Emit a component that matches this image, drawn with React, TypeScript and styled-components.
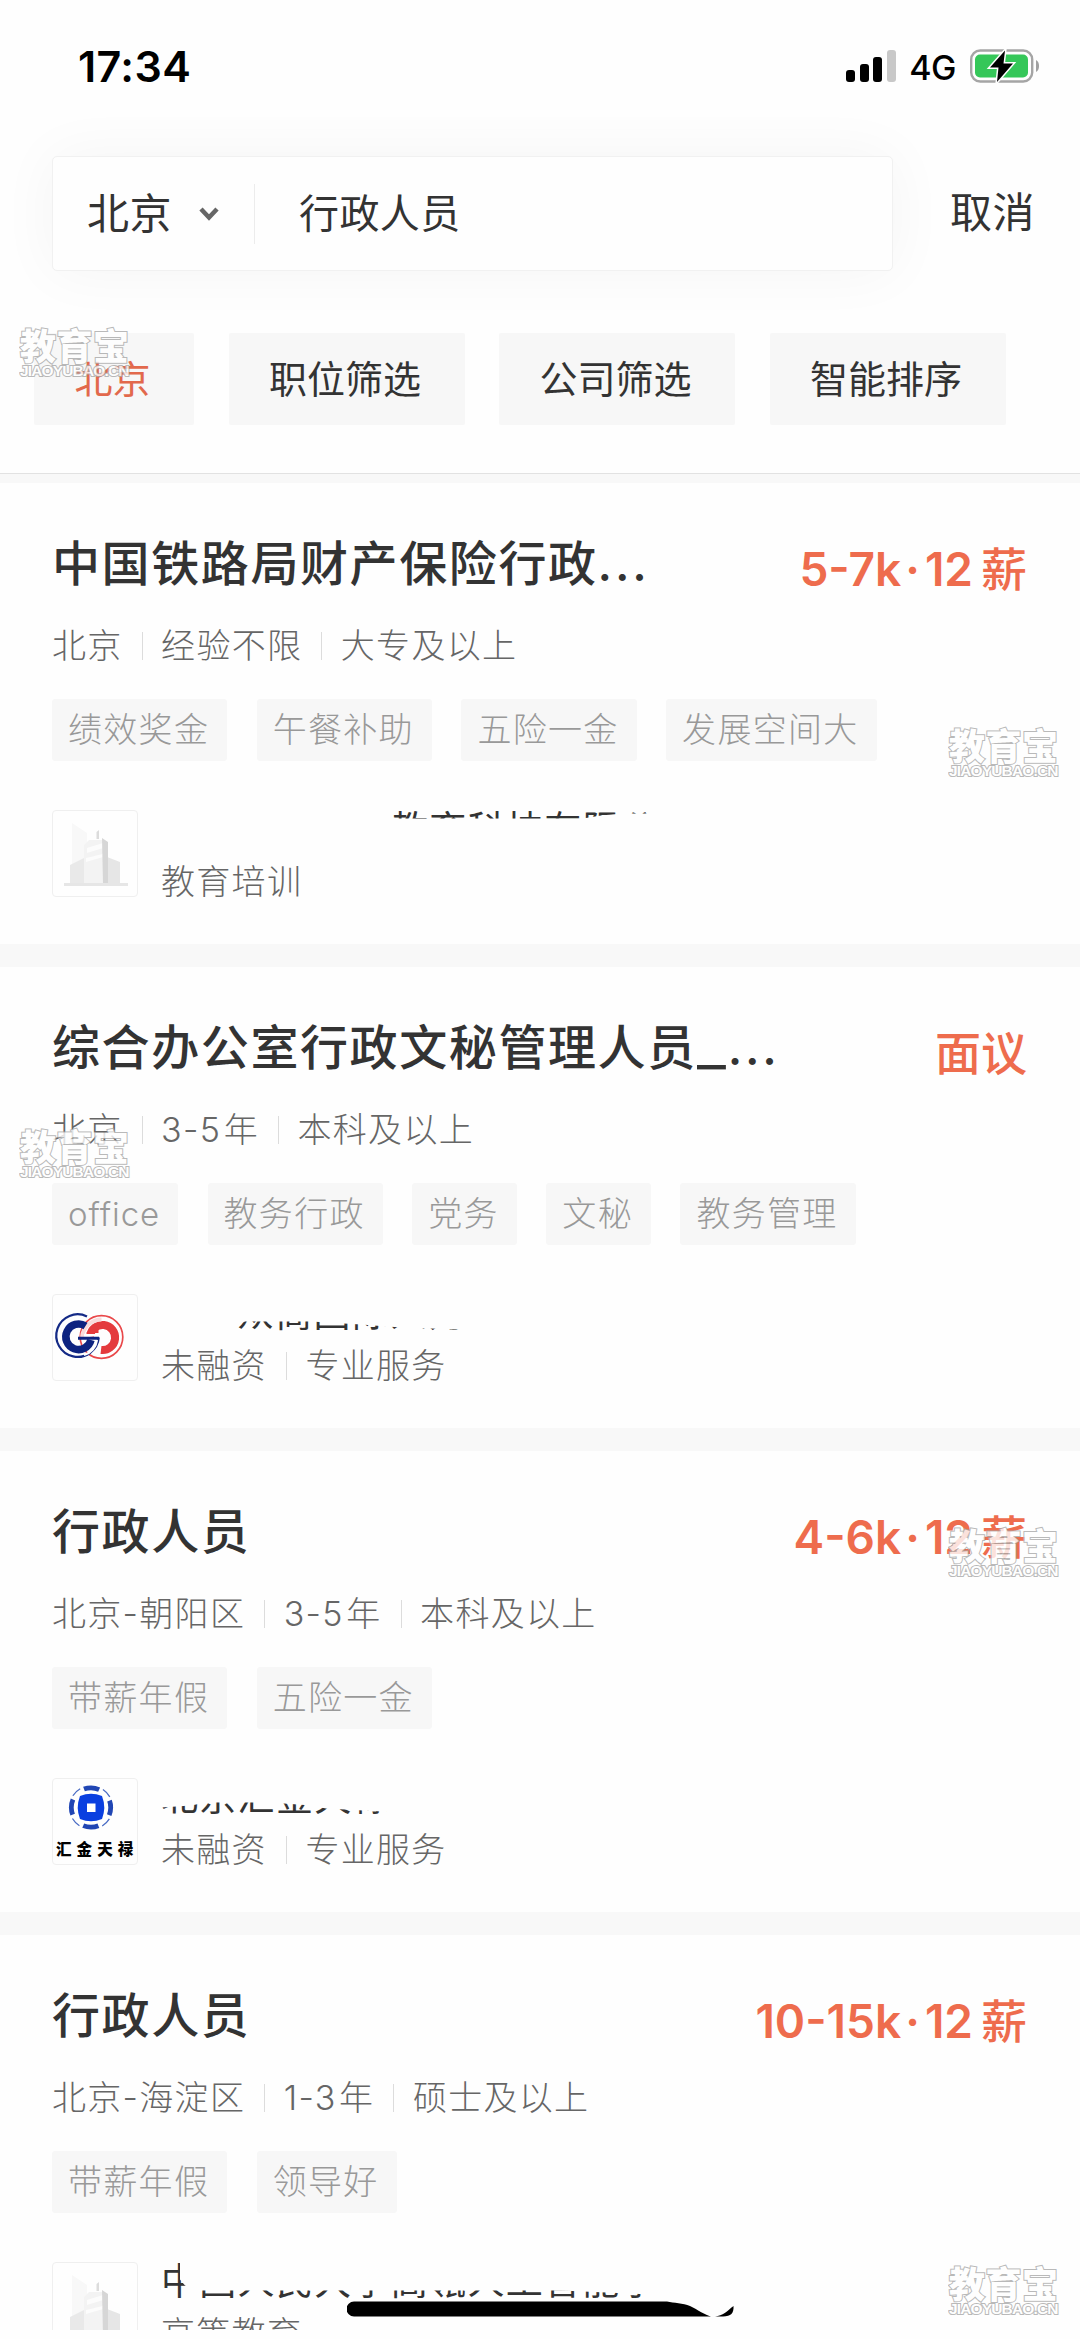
import React from "react";
import styled, { createGlobalStyle } from "styled-components";

const GlobalStyle = createGlobalStyle`
  * { box-sizing: border-box; }
  body {
    margin: 0;
    background: #fefefe;
    font-family: Inter, "Noto Sans CJK SC", sans-serif;
    color: #333;
  }
`;

const Screen = styled.div`
  position: relative;
  width: 1080px;
  height: 2339px;
  overflow: hidden;
  background: #fefefe;
`;

const Viewport = styled.div`
  height: 2330px;
  overflow: hidden;
`;

const StatusBar = styled.div`
  height: 132px;
  padding: 0 41px 0 78px;
  display: flex;
  align-items: center;
  justify-content: space-between;
  color: #000;
`;

const Clock = styled.div`
  font-size: 43px;
  font-weight: 600;
  letter-spacing: 0.4px;
`;

const StatusIcons = styled.div`
  display: flex;
  align-items: center;
`;

const Network = styled.span`
  margin: 2px 14px 0 13px;
  font-size: 34px;
  font-weight: 500;
  letter-spacing: -0.5px;
`;

const SearchRow = styled.div`
  margin-top: 24px;
  padding: 0 45px 0 52px;
  display: flex;
  align-items: center;
  justify-content: space-between;
`;

const SearchBox = styled.div`
  width: 841px;
  height: 115px;
  margin-bottom: -1px;
  padding-left: 34px;
  display: flex;
  align-items: center;
  background: #fefefe;
  border: 1px solid #f1f1f1;
  border-radius: 5px;
  box-shadow: 0 0 60px rgba(0, 0, 0, 0.045);
`;

const City = styled.span`
  font-size: 42px;
  line-height: 60px;
  letter-spacing: 0.5px;
`;

const Chevron = styled.svg`
  margin: 0 34px 0 26px;
`;

const SearchDivider = styled.i`
  width: 1px;
  height: 60px;
  background: #ececec;
`;

const Query = styled.span`
  margin-left: 44px;
  font-size: 40px;
  line-height: 60px;
  letter-spacing: 0.4px;
`;

const Filters = styled.div`
  padding: 63px 34px 48px;
  display: flex;
  gap: 34.5px;
  border-bottom: 1px solid #e2e2e2;
`;

const Filter = styled.button<{ $active?: boolean }>`
  width: ${(p) => (p.$active ? "160px" : "236px")};
  height: 92px;
  padding: 0 3px 0 0;
  border: 0;
  border-radius: 2px;
  background: #f7f7f7;
  color: ${(p) => (p.$active ? "#e2694c" : "#333")};
  font: inherit;
  font-size: 38px;
  line-height: 60px;
`;

const Band = styled.div<{ $height: number }>`
  height: ${(p) => p.$height}px;
  background: #f8f8f8;
`;

const Card = styled.article`
  height: 461px;
  padding: 50.5px 53px 0 52px;
`;

const TitleRow = styled.div`
  height: 60px;
  display: flex;
  justify-content: space-between;
`;

const Title = styled.h2`
  margin: 0;
  font-size: 48px;
  font-weight: 500;
  line-height: 60px;
  letter-spacing: 1.6px;
`;

const Ellipsis = styled.span`
  letter-spacing: 2.8px;
`;

const Underscore = styled.span`
  display: inline-block;
  transform: scaleX(1.3);
  transform-origin: left;
  margin-right: 7px;
`;

const Salary = styled.div`
  margin-top: 5px;
  font-size: 46px;
  font-weight: 600;
  line-height: 60px;
  color: #ee6c4d;
  white-space: nowrap;
`;

const SalaryDot = styled.span`
  margin: 0 5px 0 4px;
`;

const SalaryUnit = styled.span`
  margin-left: 8px;
  font-weight: 500;
`;

const Meta = styled.div`
  display: flex;
  align-items: center;
  font-size: 34px;
  font-weight: 300;
  line-height: 34px;
  letter-spacing: 1.3px;
  color: #666;
  & > span + span {
    margin-left: 19px;
    padding-left: 19.5px;
    background: linear-gradient(#dcdcdc, #dcdcdc) 0 3px / 1px 28px no-repeat;
  }
`;

const Year = styled.span`
  margin-left: 2.5px;
`;

const JobMeta = styled(Meta)`
  margin-top: 35px;
`;

const Tags = styled.div`
  margin-top: 36px;
  display: flex;
  gap: 29.5px;
`;

const Tag = styled.span<{ $latin: boolean }>`
  height: 62px;
  padding: 0 18px 0 16px;
  border-radius: 3px;
  background: #f7f7f7;
  font-size: ${(p) => (p.$latin ? "33px" : "34px")};
  font-weight: 300;
  line-height: 62px;
  letter-spacing: ${(p) => (p.$latin ? "0.9px" : "1.3px")};
  color: #999;
`;

const Company = styled.div`
  margin-top: 49px;
  display: flex;
`;

const LogoBox = styled.div`
  width: 86px;
  height: 87px;
  border: 1px solid #efefef;
  border-radius: 4px;
  overflow: hidden;
  & > svg { display: block; }
`;

const LogoCaption = styled.div`
  margin-top: 7px;
  padding-left: 3px;
  font-size: 15.5px;
  font-weight: 900;
  line-height: 20px;
  letter-spacing: 5.1px;
  white-space: nowrap;
  color: #000;
`;

const CompanyText = styled.div`
  margin-left: 23px;
`;

const CompanyName = styled.div<{ $indent: number; $clip: string }>`
  height: 40px;
  margin-bottom: 15px;
  padding-left: ${(p) => p.$indent}px;
  font-size: 37px;
  line-height: 40px;
  letter-spacing: 1.3px;
  white-space: nowrap;
  clip-path: polygon(${(p) => p.$clip});
`;

const Watermark = styled.div<{ $x: number; $y: number }>`
  position: absolute;
  left: ${(p) => p.$x}px;
  top: ${(p) => p.$y}px;
  width: 112px;
  white-space: nowrap;
  color: #fff;
  opacity: 0.8;
  paint-order: stroke fill;
  -webkit-text-stroke: 2px #a8a8a8;
`;

const WatermarkName = styled.div`
  font-size: 36px;
  font-weight: 900;
  line-height: 34px;
  letter-spacing: 0.5px;
`;

const WatermarkSite = styled.div`
  font-family: "Liberation Sans", Arial, sans-serif;
  font-size: 15.5px;
  font-weight: 700;
  line-height: 16px;
  margin-top: -1px;
  letter-spacing: -0.85px;
`;

const HomeBar = styled.svg`
  position: absolute;
  left: 347px;
  top: 2301px;
`;

const StatusSignal = () => (
  <svg width="50" height="32" viewBox="0 0 50 32">
    <rect x="0" y="20" width="9" height="12" rx="3" />
    <rect x="14" y="14" width="9" height="18" rx="3" />
    <rect x="27" y="7" width="9" height="25" rx="3" />
    <rect x="41" y="0" width="9" height="32" rx="3" fill="#c8c8c8" />
  </svg>
);

const Battery = () => (
  <svg width="69" height="34" viewBox="0 0 69 34">
    <rect x="1.2" y="1.5" width="61" height="31" rx="9" fill="none" stroke="#a5a5a5" strokeWidth="2.4" />
    <path d="M66 11c4 1.500 4 10.500 0 12z" fill="#a0a0a0" />
    <rect x="5" y="5.500" width="53" height="23" rx="5" fill="#35c759" />
    <path d="M35 1.500 20 18.500H28.500L27 33 43 14.500H33.500z" fill="#000" stroke="#fff" strokeWidth="3" paintOrder="stroke" />
  </svg>
);

const BuildingLogo = () => (
  <svg width="84" height="85" viewBox="0 0 84 85">
    <path d="M19 12 34 22V52L19 60z" fill="#f8f8f8" />
    <path d="M17 54 31 47V73H17z" fill="#e9e9e9" />
    <path d="M54 46 67 51V73H54z" fill="#e6e6e6" />
    <path d="M31 34 36 29H50V73H31z" fill="#f3f3f3" />
    <path d="M34 37 50 32V37L34 42zM33 47 50 43V46L33 51z" fill="#fcfcfc" />
    <path d="M49 27 55 31V73H50z" fill="#d6d6d6" />
    <path d="M43.500 21 46 19V28H43.500z" fill="#dcdcdc" />
    <rect x="11" y="72" width="64" height="3" fill="#e6e6e6" />
  </svg>
);

const RingsLogo = () => (
  <svg width="84" height="85" viewBox="0 0 84 85" fill="none">
    <circle cx="48.500" cy="42" r="21.300" stroke="#e9484a" strokeWidth="1.700" />
    <path d="M37 41A12.600 12.600 0 1 1 48 55" stroke="#e43a3d" strokeWidth="8" />
    <path d="M29 42A19.700 19.700 0 0 1 48.500 24.500" stroke="#f9dcdc" strokeWidth="4" />
    <path d="M34 21.500A21.300 21.300 0 1 0 45.800 42.500" stroke="#142a86" strokeWidth="2.200" />
    <path d="M32.500 31A12.800 12.800 0 1 0 38 45" stroke="#0d2380" strokeWidth="7.500" />
    <path d="M44 45A18.200 18.200 0 0 1 31 60" stroke="#fff" strokeWidth="2.200" />
    <path d="M25 43.300H46" stroke="#0d2380" strokeWidth="3" />
    <path d="M31 40H46" stroke="#fff" strokeWidth="2" />
    <path d="M33 38H45.500V34.500C40 34 38 36 33 38z" fill="#e43a3d" />
  </svg>
);

const CoinLogo = () => (
  <svg width="84" height="54" viewBox="0 0 84 54">
    <g fill="none" stroke="#2146b4">
      <circle cx="38" cy="28.500" r="19.700" strokeWidth="4.800" strokeDasharray="15.500 15.450" strokeDashoffset="7.750" />
      <circle cx="38" cy="28.500" r="21.600" strokeWidth="1.300" stroke="#4a6cc4" strokeDasharray="10 23.930" strokeDashoffset="-11.960" />
    </g>
    <path d="M27 17Q38 12.500 49 17Q53.500 28.500 49 40Q38 44.500 27 40Q22.500 28.500 27 17z" fill="#0a3fe0" />
    <rect x="34" y="24.500" width="8.500" height="8.500" fill="#fff" />
  </svg>
);

type Job = {
  title: string;
  underscore?: boolean;
  truncated?: boolean;
  pay?: string;
  payUnit: string;
  meta: string[];
  tags: string[];
  logo: React.ReactNode;
  company: string;
  indent: number;
  clip: string;
  about: string[];
};

const jobs: Job[] = [
  {
    title: "中国铁路局财产保险行政",
    truncated: true,
    pay: "5-7k",
    payUnit: "薪",
    meta: ["北京", "经验不限", "大专及以上"],
    tags: ["绩效奖金", "午餐补助", "五险一金", "发展空间大"],
    logo: <BuildingLogo />,
    company: "教育科技有限公司",
    indent: 230,
    clip: "225px 0, 500px 0, 500px 4px, 462px 4px, 440px 6px, 422px 9px, 225px 9px",
    about: ["教育培训"],
  },
  {
    title: "综合办公室行政文秘管理人员",
    underscore: true,
    truncated: true,
    payUnit: "面议",
    meta: ["北京", "3-5年", "本科及以上"],
    tags: ["office", "教务行政", "党务", "文秘", "教务管理"],
    logo: <RingsLogo />,
    company: "众商国际人力",
    indent: 76,
    clip: "66px 37px, 84px 28px, 150px 28px, 200px 31px, 240px 34px, 300px 36px, 300px 40px, 66px 40px",
    about: ["未融资", "专业服务"],
  },
  {
    title: "行政人员",
    pay: "4-6k",
    payUnit: "薪",
    meta: ["北京-朝阳区", "3-5年", "本科及以上"],
    tags: ["带薪年假", "五险一金"],
    logo: (
      <>
        <CoinLogo />
        <LogoCaption>汇金天禄</LogoCaption>
      </>
    ),
    company: "北京汇金天禄",
    indent: 0,
    clip: "0 30px, 30px 28px, 45px 25px, 110px 25px, 150px 28px, 165px 31px, 240px 35px, 240px 40px, 0 40px",
    about: ["未融资", "专业服务"],
  },
  {
    title: "行政人员",
    pay: "10-15k",
    payUnit: "薪",
    meta: ["北京-海淀区", "1-3年", "硕士及以上"],
    tags: ["带薪年假", "领导好"],
    logo: <BuildingLogo />,
    company: "中国人民大学高瓴人工智能学院",
    indent: 0,
    clip: "0 0, 19px 0, 19px 18px, 24px 24px, 34px 29px, 400px 29px, 490px 33px, 490px 40px, 0 40px",
    about: ["高等教育"],
  },
];

const marks = [
  [20, 330],
  [949, 730],
  [20, 1131],
  [949, 1530],
  [949, 2268],
];

const MetaText = ({ text }: { text: string }) =>
  text.endsWith("年") ? (
    <span>
      {text.slice(0, -1)}
      <Year>年</Year>
    </span>
  ) : (
    <span>{text}</span>
  );

export default function App() {
  return (
    <Screen>
      <GlobalStyle />
      <Viewport>
        <StatusBar>
          <Clock>17:34</Clock>
          <StatusIcons>
            <StatusSignal />
            <Network>4G</Network>
            <Battery />
          </StatusIcons>
        </StatusBar>
        <SearchRow>
          <SearchBox>
            <City>北京</City>
            <Chevron width="22" height="16" viewBox="0 0 22 16">
              <path d="M3 3l8 8.500L19 3" fill="none" stroke="#666" strokeWidth="4.500" />
            </Chevron>
            <SearchDivider />
            <Query>行政人员</Query>
          </SearchBox>
          <City>取消</City>
        </SearchRow>
        <Filters>
          <Filter $active>北京</Filter>
          <Filter>职位筛选</Filter>
          <Filter>公司筛选</Filter>
          <Filter>智能排序</Filter>
        </Filters>
        <Band $height={9} />
        {jobs.map((job, i) => (
          <React.Fragment key={i}>
            {i > 0 && <Band $height={23} />}
            <Card>
              <TitleRow>
                <Title>
                  {job.title}
                  {job.underscore && <Underscore>_</Underscore>}
                  {job.truncated && <Ellipsis>...</Ellipsis>}
                </Title>
                <Salary>
                  {job.pay && (
                    <>
                      {job.pay}
                      <SalaryDot>·</SalaryDot>12
                    </>
                  )}
                  <SalaryUnit>{job.payUnit}</SalaryUnit>
                </Salary>
              </TitleRow>
              <JobMeta>
                {job.meta.map((m) => (
                  <MetaText key={m} text={m} />
                ))}
              </JobMeta>
              <Tags>
                {job.tags.map((t) => (
                  <Tag key={t} $latin={/^[a-z]+$/.test(t)}>
                    {t}
                  </Tag>
                ))}
              </Tags>
              <Company>
                <LogoBox>{job.logo}</LogoBox>
                <CompanyText>
                  <CompanyName $indent={job.indent} $clip={job.clip}>
                    {job.company}
                  </CompanyName>
                  <Meta>
                    {job.about.map((a) => (
                      <span key={a}>{a}</span>
                    ))}
                  </Meta>
                </CompanyText>
              </Company>
            </Card>
          </React.Fragment>
        ))}
      </Viewport>
      <HomeBar width="388" height="16" viewBox="0 0 388 16">
        <path d="M7 .5H320C327 2 336 2 343 5C351 9 358 14 364 15.500H7A7.500 7.500 0 0 1 7 .5z" />
        <path d="M368 15.500C376 15 380 10 386.500 5C387 12 384 15.500 376 15.500z" />
      </HomeBar>
      {marks.map(([x, y]) => (
        <Watermark key={`${x}-${y}`} $x={x} $y={y}>
          <WatermarkName>教育宝</WatermarkName>
          <WatermarkSite>JIAOYUBAO.CN</WatermarkSite>
        </Watermark>
      ))}
    </Screen>
  );
}
